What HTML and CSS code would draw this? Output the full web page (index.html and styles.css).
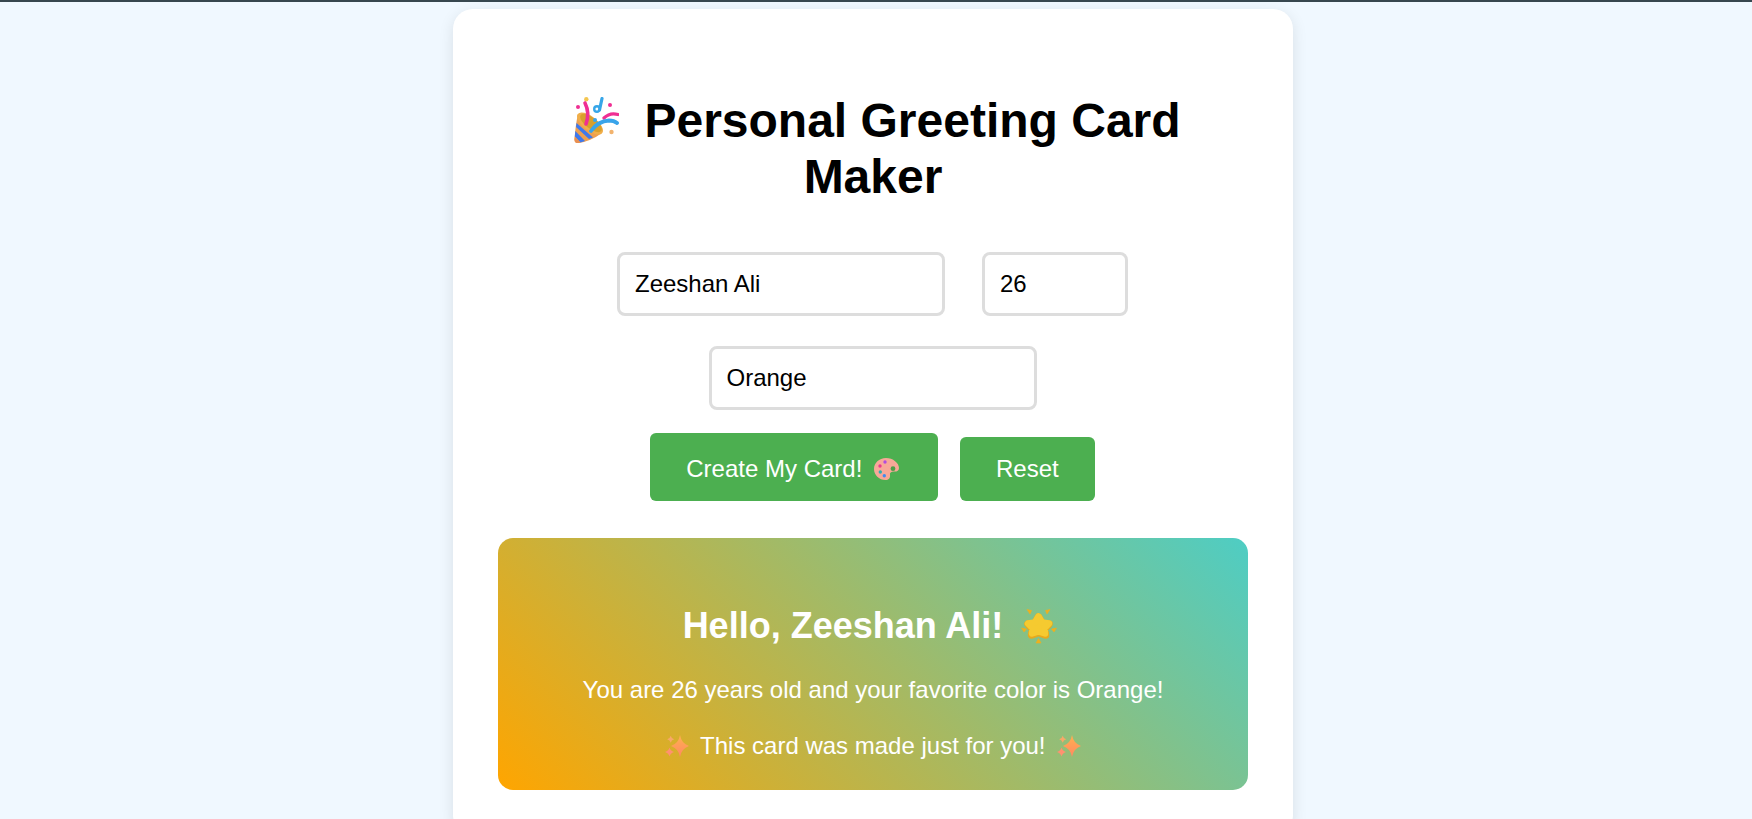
FILE: index.html
```html
<!DOCTYPE html>
<html lang="en">
<head>
<meta charset="utf-8">
<title>Personal Greeting Card Maker</title>
<link rel="stylesheet" href="styles.css">
</head>
<body>
<main class="card">
  <h1 class="title">
    <svg class="emoji emoji-title" viewBox="0 0 45 46" aria-hidden="true">
      <path d="M4 17 L28 36 Q17 44 5 46 Q0 46.500 .5 42 Q1.500 28 4 17Z" fill="#ee9f4f"/>
      <path d="M2.500 26 L19 40.500 L15 42 L2 30Z" fill="#3f78ec"/>
      <path d="M1.300 34 L11 44 L6.500 45.500 L.8 39.500Z" fill="#3f78ec"/>
      <path d="M.8 39.500 L6.500 45.500 L4 46 Q.2 46.500 .5 42Z" fill="#e98f52"/>
      <ellipse cx="16" cy="26.500" rx="15.500" ry="7" transform="rotate(38 16 26.500)" fill="#f0ae4a"/>
      <ellipse cx="17" cy="26" rx="13" ry="5.500" transform="rotate(38 17 26)" fill="#d8a02c"/>
      <path d="M11 6 Q16 16 12 27" fill="none" stroke="#ef2f93" stroke-width="3.600" stroke-linecap="round"/>
      <path d="M28 1.500 L25.500 13" fill="none" stroke="#37a6e8" stroke-width="3.200" stroke-linecap="round"/>
      <circle cx="23" cy="12" r="2.800" fill="none" stroke="#37a6e8" stroke-width="2.400"/>
      <path d="M30 21 Q36 15 44 17.500" fill="none" stroke="#ef2f93" stroke-width="3.200" stroke-linecap="round"/>
      <path d="M17 34 Q24 24 35 23.500 Q40 23.500 43 26" fill="none" stroke="#39a4ea" stroke-width="3.800" stroke-linecap="round"/>
      <circle cx="12.300" cy="2.200" r="2.200" fill="#f4c650"/>
      <circle cx="4" cy="10" r="2" fill="#ef2f93"/>
      <circle cx="36" cy="8" r="2" fill="#ef2f93"/>
      <circle cx="21" cy="23" r="2" fill="#39a4ea"/>
      <circle cx="37.500" cy="35" r="2.200" fill="#f2b36e"/>
    </svg><span>Personal Greeting Card Maker</span>
  </h1>
  <div class="fields">
    <input class="field field-name" type="text" value="Zeeshan Ali">
    <input class="field field-age" type="text" value="26">
    <input class="field field-name" type="text" value="Orange">
  </div>
  <div class="actions">
    <button class="btn btn-create" type="button">Create My Card!
      <svg class="emoji emoji-btn" viewBox="0 0 25 22" aria-hidden="true">
        <path d="M12 0C19 0 25 5 25 10C25 13 22 14 20 13.500C17 13.500 15.500 15 16 17C16.500 20 14.500 22 11.500 22C5 22 0 17 0 11C0 5 5 0 12 0Z" fill="#f8a898"/>
        <circle cx="19" cy="10.700" r="2.400" fill="#4f9e49"/>
        <circle cx="11" cy="4" r="1.700" fill="#b34be0"/>
        <circle cx="6" cy="8" r="1.700" fill="#ec3a8e"/>
        <circle cx="6.300" cy="14" r="1.700" fill="#2cb0b0"/>
        <circle cx="10.300" cy="17.700" r="1.700" fill="#3f8cf0"/>
      </svg>
    </button>
    <button class="btn btn-reset" type="button">Reset</button>
  </div>
  <section class="result">
    <h2 class="result-title">Hello, Zeeshan Ali!
      <svg class="emoji emoji-star" viewBox="0 0 36 36" aria-hidden="true">
        <path d="M17.500 9 L21 15 L28 16 L23.500 21 L24.500 27 L17.500 24.500 L10.500 27 L11.500 21 L7 16 L14 15Z" fill="#e8a91c" stroke="#e8a91c" stroke-width="7.500" stroke-linejoin="round"/>
        <path d="M17.500 8.500 L21 14.500 L28 15.500 L23.500 20 L24 25.500 L17.500 23.500 L11 25.500 L11.500 20 L7 15.500 L14 14.500Z" fill="#f5ca30" stroke="#f5ca30" stroke-width="6.500" stroke-linejoin="round"/>
        <path d="M6 1.500 L10.500 2.500 L9 6Z M29 1.500 L24.500 2.500 L26 6Z M.5 20 L5.500 21 L3 24Z M35.500 20 L30.500 21 L33 24Z M17.500 30.500 L20 35 L15 35Z" fill="#efb01f" stroke="#efb01f" stroke-width=".6" stroke-linejoin="round"/>
      </svg>
    </h2>
    <p class="result-line">You are 26 years old and your favorite color is Orange!</p>
    <p class="result-line">
      <svg class="emoji emoji-sparkle" viewBox="0 0 24 22" aria-hidden="true"><use href="#sparkle"/></svg>
      This card was made just for you!
      <svg class="emoji emoji-sparkle" viewBox="0 0 24 22" aria-hidden="true"><use href="#sparkle"/></svg>
    </p>
  </section>
</main>
<svg class="defs" aria-hidden="true">
  <defs>
    <linearGradient id="sparkle-fill" x1="0" y1="0" x2="0" y2="1">
      <stop offset="0" stop-color="#ffb04f"/>
      <stop offset="1" stop-color="#ff8a62"/>
    </linearGradient>
    <g id="sparkle">
      <path d="M15 0 Q16.500 8.500 24 11 Q16.500 13.500 15 22 Q13.500 13.500 6 11 Q13.500 8.500 15 0Z" fill="url(#sparkle-fill)"/>
      <path d="M5.700 .8 Q6.400 3.600 9.200 4.300 Q6.400 5 5.700 7.800 Q5 5 2.200 4.300 Q5 3.600 5.700 .8Z" fill="#f7a868"/>
      <path d="M4.500 12.500 Q5.300 15.700 9 17 Q5.300 18.300 4.500 21.500 Q3.700 18.300 0 17 Q3.700 15.700 4.500 12.500Z" fill="#ff9270"/>
    </g>
  </defs>
</svg>
</body>
</html>
```

FILE: styles.css
```css
html, body {
  margin: 0;
  height: 100%;
  overflow: hidden;
}
body {
  background: #f0f8ff;
  border-top: 2px solid #37474f;
  font-family: "Liberation Sans", Arial, sans-serif;
  box-sizing: border-box;
  padding: 7px 6px 0 0;
  text-align: center;
}
.card {
  width: 750px;
  margin: 0 auto;
  padding: 45px;
  background: #fff;
  border-radius: 20px;
  box-shadow: 0 4px 15px rgba(0, 0, 0, .1);
}
.title {
  margin: 39px 0 47px;
  font-size: 48px;
  line-height: 56px;
  font-weight: 700;
  color: #000;
}
.emoji-title { width: 45px; height: 46px; margin: 0 25px 0 9px; vertical-align: -6px; }
.emoji-btn { width: 25px; height: 22px; margin: 0 3px 0 5px; vertical-align: -3px; }
.emoji-star { width: 36px; height: 36px; margin: 0 6px 0 8px; vertical-align: -6px; }
.emoji-sparkle { width: 24px; height: 22px; margin: 0 5px; vertical-align: -3px; }
.fields { display: flex; flex-wrap: wrap; justify-content: center; gap: 30px 37px; padding: 0 41px 0 40px; }
.field {
  box-sizing: border-box;
  height: 64px;
  padding: 0 15px;
  border: 3px solid #ddd;
  border-radius: 8px;
  font: 24px "Liberation Sans", Arial, sans-serif;
  color: #000;
  background: #fff;
}
.field-name { width: 328px; }
.field-age { width: 146px; }
.actions { display: flex; justify-content: center; align-items: flex-end; gap: 22px; margin-top: 23px; padding-right: 1px; }
.btn {
  border: 0;
  border-radius: 6px;
  background: #4caf50;
  color: #fff;
  font: 24px "Liberation Sans", Arial, sans-serif;
  padding: 0 36px;
  height: 64px;
}
.btn-create { height: 68px; padding-top: 4px; }
.result {
  margin-top: 37px;
  height: 252px;
  box-sizing: border-box;
  padding-top: 67px;
  border-radius: 15px;
  background: linear-gradient(45deg, #ffa500, #4ecdc4);
  color: #fff;
}
.result-title { margin: 0 0 30px; font-size: 36px; line-height: 41px; font-weight: 700; }
.result-line { margin: 0 0 28px; font-size: 24px; line-height: 28px; }
.defs { position: absolute; width: 0; height: 0; }
```
